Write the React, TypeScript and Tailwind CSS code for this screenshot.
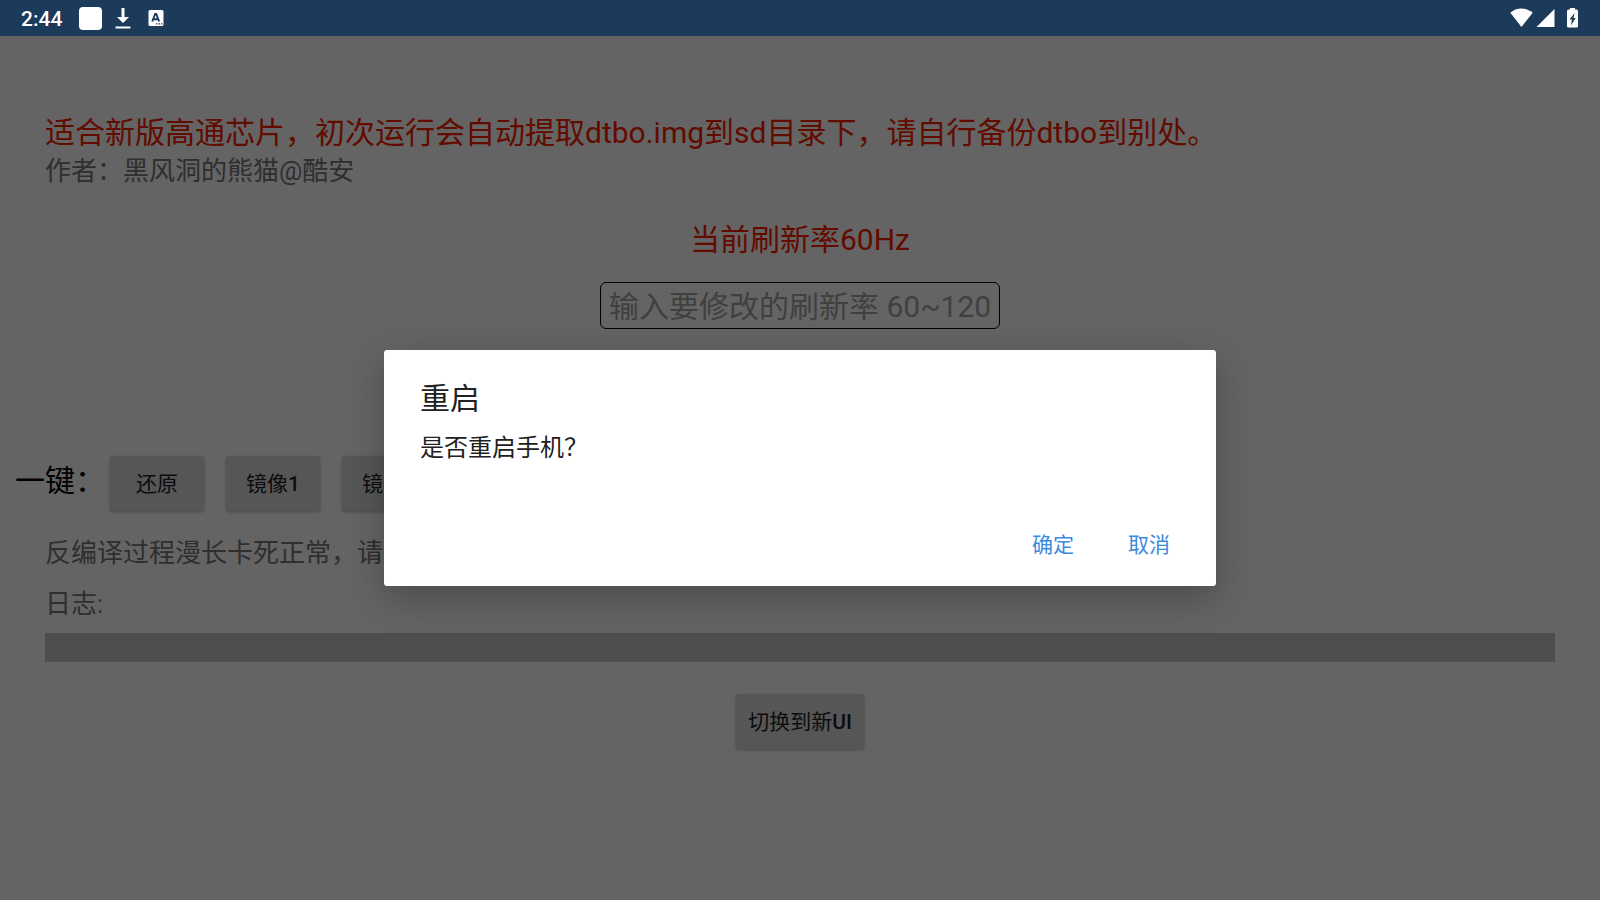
import React, { useState } from 'react';

const images = [
  { name: '还原', slot: '' },
  { name: '镜像', slot: '1' },
  { name: '镜像', slot: '2' }
];

const raisedButton =
  'h-[55px] rounded-[3px] bg-[#d6d7d7] text-[21px] leading-6 text-[#212121] shadow-[0_1px_3px_rgba(0,0,0,0.3)]';

function StatusBar() {
  return (
    <header className="flex h-9 items-center justify-between bg-[#1c3a5a] pl-[21px] pr-[22px] text-white">
      <div className="flex items-center">
        <span className="pt-px text-[21px] leading-6 font-medium">2:44</span>
        <span className="ml-[17px] h-[23px] w-[23px] rounded-[4px] bg-white" />
        <svg className="ml-[13px] h-[22px] w-4" viewBox="0 0 16 22" fill="currentColor">
          <path d="M6.500 1h3v9h4.500L8 16l-6-6h4.500z" />
          <path d="M0.500 19.500h15v2h-15z" />
        </svg>
        <svg className="ml-[17px] h-4 w-4" viewBox="0 0 16 16">
          <rect x="0.5" y="0" width="15" height="16" rx="1.5" fill="#fff" />
          <path d="M4.200 11.500 7.200 4h1l3 7.500M5.300 9.200h4.800" fill="none" stroke="#1c3a5a" strokeWidth="1.9" />
          <path d="M8 13.200h1.400v1.400H8zM10.500 13.200h1.400v1.400h-1.400zM13 13.200h1.400v1.400H13z" fill="#1c3a5a" />
        </svg>
      </div>
      <div className="flex items-center">
        <svg className="h-5 w-[23px]" viewBox="0 0 23 20" fill="currentColor">
          <path d="M0.3 4.800C3.400 2 7.200 0.500 11.500 0.500s8.100 1.500 11.200 4.300L11.500 19z" />
        </svg>
        <svg className="ml-[3px] h-5 w-[19px]" viewBox="0 0 19 20" fill="currentColor">
          <path d="M0.500 19 18.500 1v18z" />
        </svg>
        <svg className="ml-3 h-5 w-[11px]" viewBox="0 0 11 20">
          <path d="M3 0h5v1.500h1.500A1.500 1.500 0 0 1 11 3v15A1.500 1.500 0 0 1 9.500 19.500h-8A1.500 1.500 0 0 1 0 18V3A1.500 1.500 0 0 1 1.500 1.500H3z" fill="#fff" />
          <path d="M7.500 5 2.500 11.500H5L4 17.500 8.700 10H6.500z" fill="#1c3a5a" />
        </svg>
      </div>
    </header>
  );
}

function App() {
  const [rate, setRate] = useState('');
  const [dialogOpen, setDialogOpen] = useState(true);

  return (
    <div className="flex min-h-screen flex-col bg-[#fafafa] font-['Roboto','Noto_Sans_CJK_SC',sans-serif]">
      <StatusBar />

      <div className="relative flex grow flex-col overflow-hidden">
        <main className="flex flex-col pt-[78px] text-[26px] leading-[38px] text-[#757575]">
          <div className="px-[45px]">
            <h1 className="text-[30px] leading-[38px] text-[#f52000]">
              适合新版高通芯片，初次运行会自动提取dtbo.img到sd目录下，请自行备份dtbo到别处。
            </h1>
            <p>作者：黑风洞的熊猫@酷安</p>
          </div>

          <p className="mt-[31px] text-center text-[30px] leading-[38px] text-[#f52000]">当前刷新率60Hz</p>

          <input
            type="text"
            aria-label="刷新率"
            value={rate}
            onChange={(e) => setRate(e.target.value)}
            placeholder="输入要修改的刷新率 60~120"
            className="mt-[23px] h-[47px] w-[400px] self-center rounded-[6px] border border-black px-2 pt-0.5 text-[30px] text-black outline-none placeholder:text-[#a0a0a0]"
          />

          <div className="mt-[127px] flex items-center pl-[15px]">
            <span className="mr-[5px] pb-1.5 text-[30px] leading-[38px] text-black">一键：</span>
            <div className="flex gap-[22px]">
              {images.map((image) => (
                <button
                  key={image.name + image.slot}
                  className={`${raisedButton} w-[94px]`}
                  onClick={() => setDialogOpen(true)}
                >
                  {image.name}
                  <span className="font-medium">{image.slot}</span>
                </button>
              ))}
            </div>
          </div>

          <div className="px-[45px]">
            <p className="mt-[23px]">反编译过程漫长卡死正常，请</p>
            <p className="mt-[13px]">日志:</p>
            <div className="mt-[10px] h-[29px] bg-[#c3c3c7]" />
          </div>

          <button className={`${raisedButton} mt-8 self-center px-3`}>
            切换到新<span className="font-medium">UI</span>
          </button>
        </main>

        {dialogOpen && (
          <div className="absolute inset-0 flex items-center justify-center bg-black/60">
            <div
              role="dialog"
              aria-labelledby="dialog-title"
              className="flex h-[236px] w-[52%] flex-col rounded-[3px] bg-white pt-[30px] pr-[35px] pb-4 pl-9 text-[#212121] shadow-[0_12px_36px_rgba(0,0,0,0.25)]"
            >
              <h2 id="dialog-title" className="text-[30px] leading-[38px]">重启</h2>
              <p className="mt-3 text-[24px] leading-[36px]">是否重启手机？</p>
              <div className="mt-auto flex justify-end gap-4 text-[21px] text-[#3a8ade]">
                <button className="h-12 w-20" onClick={() => setDialogOpen(false)}>确定</button>
                <button className="-mr-2 h-12 w-20" onClick={() => setDialogOpen(false)}>取消</button>
              </div>
            </div>
          </div>
        )}
      </div>
    </div>
  );
}

export default App;
